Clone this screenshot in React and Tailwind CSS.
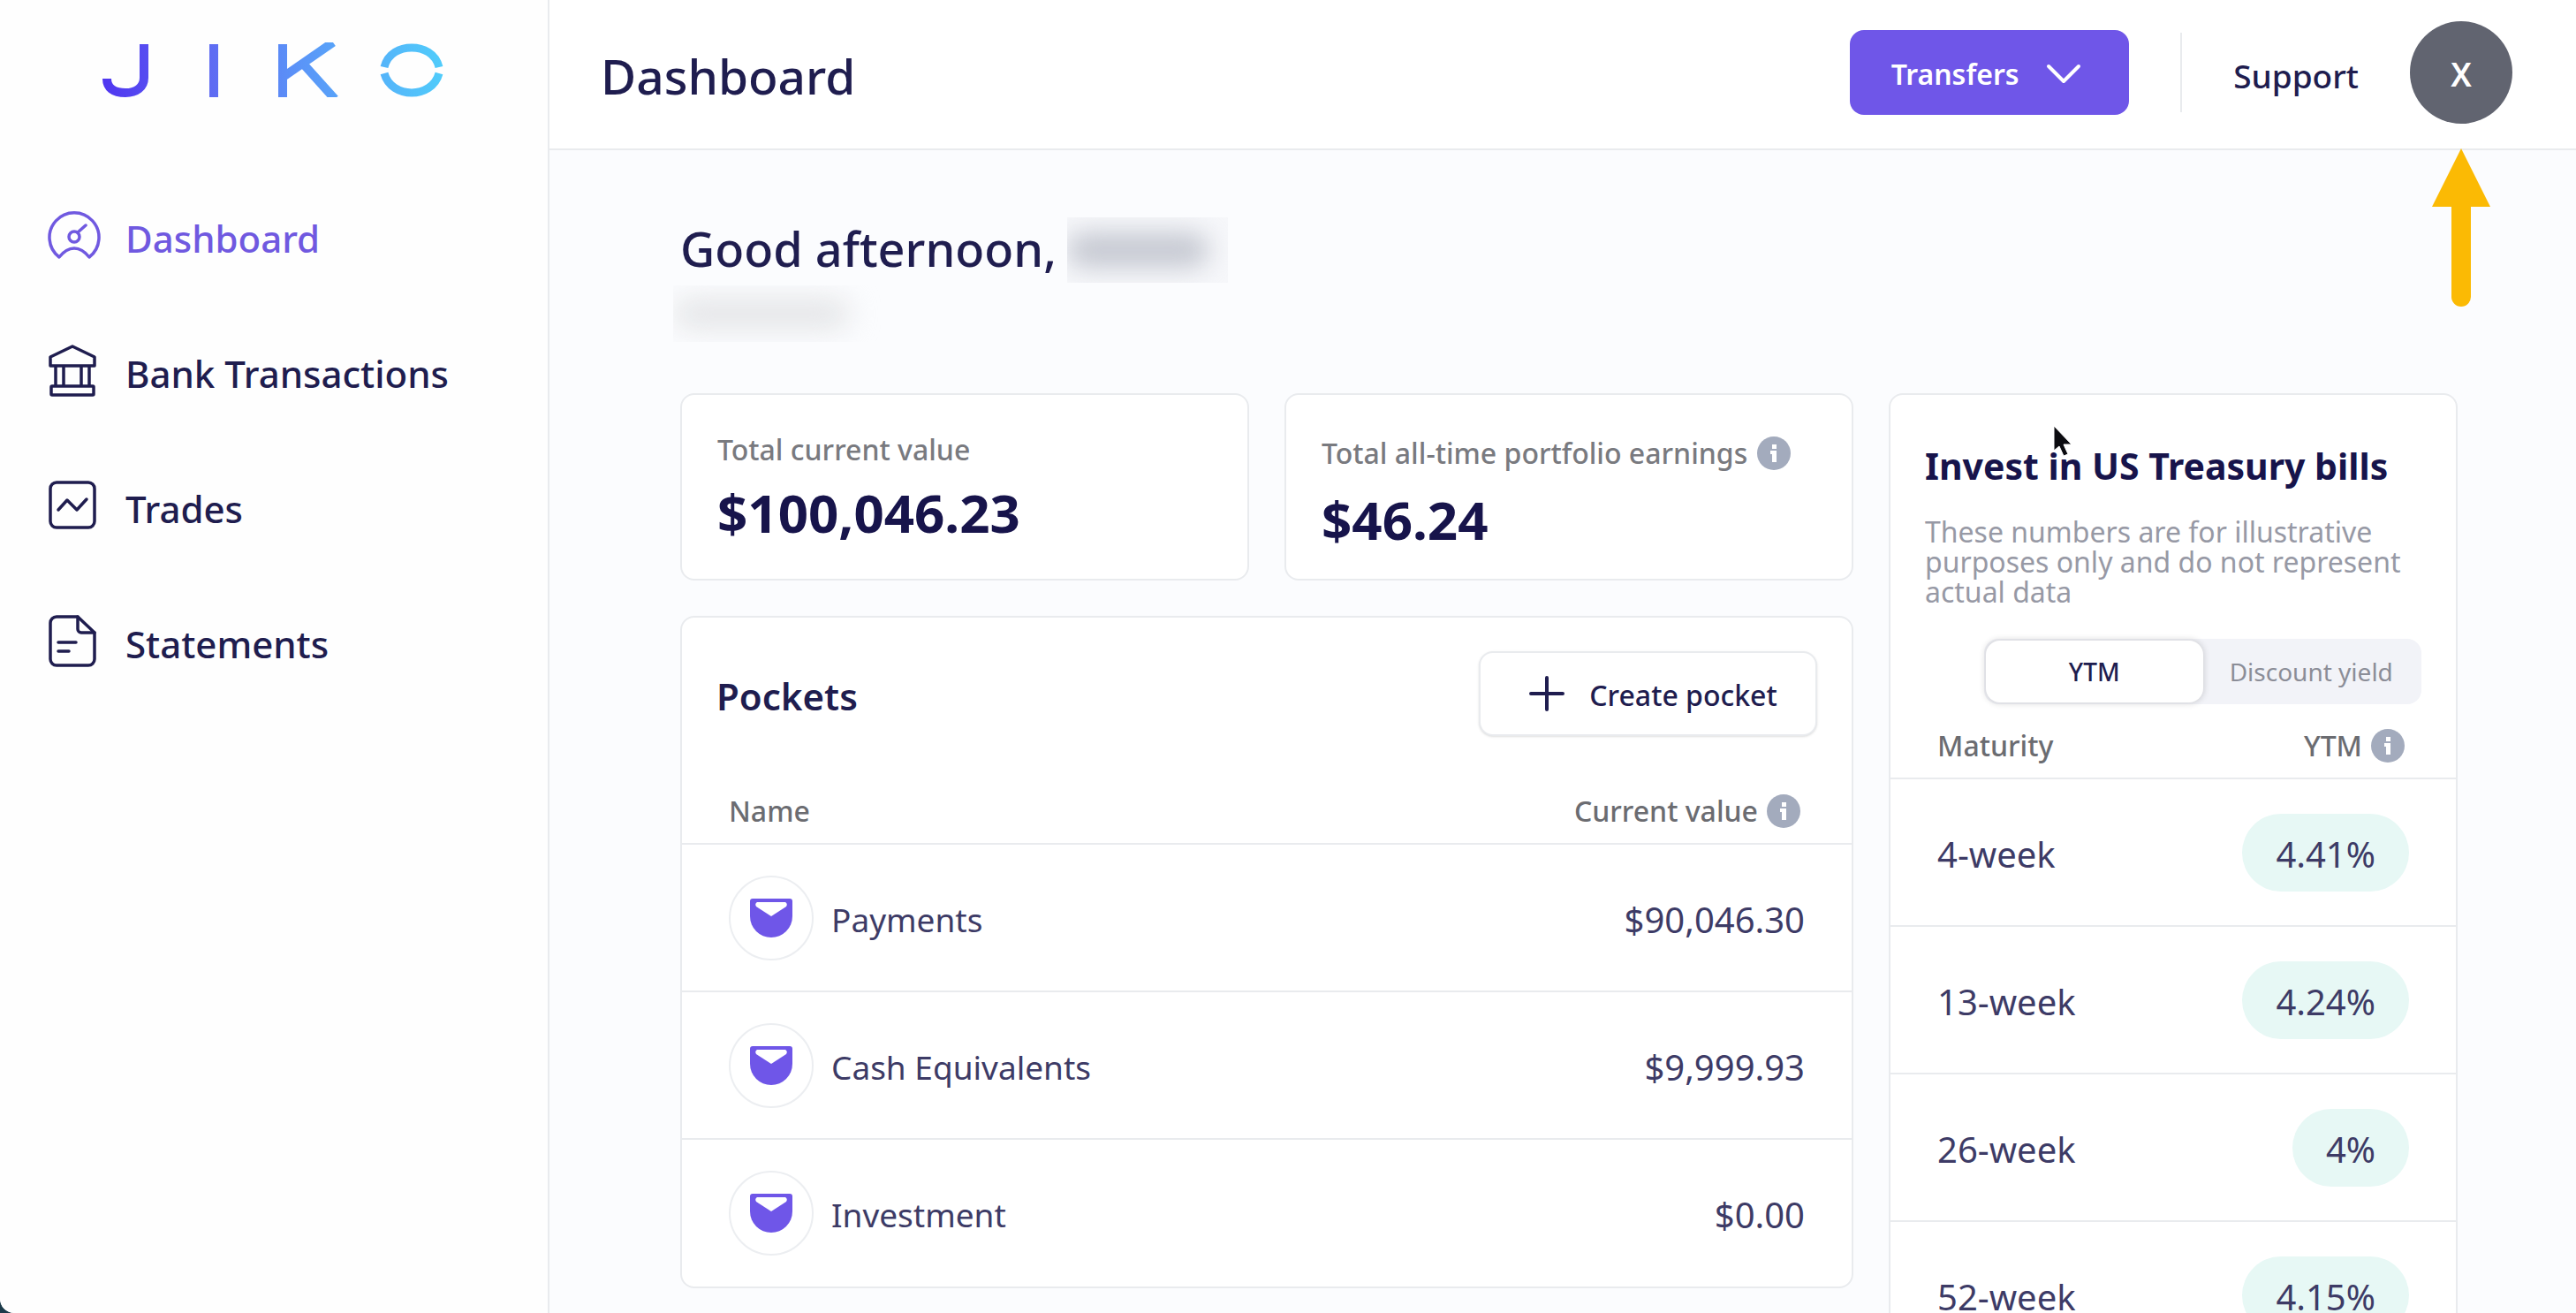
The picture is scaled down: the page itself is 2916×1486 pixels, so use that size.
const DashboardIcon = () => (
  <svg viewBox="0 0 60 60" className="size-15 shrink-0" fill="none" stroke="currentColor" strokeWidth="3.5" strokeLinejoin="round" strokeLinecap="round" aria-hidden="true">
    <path d="M13 54A28 28 0 1 1 47 54Q39 44 30 44T13 54Z" />
    <circle cx="30" cy="31" r="6" />
    <path d="M34 26L43 18" />
  </svg>
)

const BankIcon = () => (
  <svg viewBox="0 0 60 60" className="size-15 shrink-0" fill="none" stroke="currentColor" strokeWidth="3.5" strokeLinejoin="round" aria-hidden="true">
    <path d="M3 14L28 2L53 14V24H3Z" />
    <path d="M9 24V47M18 24V47M38 24V47M47 24V47" />
    <rect x="4" y="47" width="48" height="10" rx="1" />
  </svg>
)

const TradesIcon = () => (
  <svg viewBox="0 0 60 60" className="size-15 shrink-0" fill="none" stroke="currentColor" strokeWidth="3.5" strokeLinejoin="round" strokeLinecap="round" aria-hidden="true">
    <rect x="3" y="3" width="50" height="51" rx="7" />
    <path d="M12 34L22 23L33 34L44 22" />
  </svg>
)

const StatementsIcon = () => (
  <svg viewBox="0 0 60 60" className="size-15 shrink-0" fill="none" stroke="currentColor" strokeWidth="3.5" strokeLinejoin="round" strokeLinecap="round" aria-hidden="true">
    <path d="M10 2H34L53 20V50A7 7 0 0 1 46 57H10A7 7 0 0 1 3 50V9A7 7 0 0 1 10 2Z" />
    <path d="M34 2V16A4 4 0 0 0 38 20H53" />
    <path d="M12 31H32M12 41H24" />
  </svg>
)

const Logo = () => (
  <svg viewBox="0 0 388 62" className="w-[388px] h-[62px]" role="img" aria-label="Jiko">
    <defs>
      <linearGradient id="logo" gradientUnits="userSpaceOnUse" x1="0" y1="50" x2="388" y2="20">
        <stop offset="0" stopColor="#4f35f0" />
        <stop offset="0.3" stopColor="#5f68f2" />
        <stop offset="0.6" stopColor="#5a97f8" />
        <stop offset="1" stopColor="#50cdfb" />
      </linearGradient>
    </defs>
    <g fill="none" stroke="url(#logo)" strokeWidth="10">
      <path d="M48 2V40C48 51 39 57 27 57C13 57 6 51 6 41" />
      <path d="M127 2L127.010 62" />
      <path d="M205 2L205.010 62" />
      <path d="M262 0L207 38" />
      <path d="M228 24L264 64" />
      <path d="M320 28C324 12 338 6 351 6C364 6 378 12 382 28" strokeWidth="9" />
      <path d="M320 35C324 50 338 57 351 57C364 57 378 50 382 35" strokeWidth="9" />
    </g>
  </svg>
)

const PocketIcon = () => (
  <span className="flex size-24 shrink-0 items-center justify-center rounded-full border-2 border-[#eceef1]">
    <svg viewBox="0 0 48 44" className="h-11 w-12" aria-hidden="true">
      <path d="M3 0H45A3 3 0 0 1 48 3V20A24 24 0 0 1 0 20V3A3 3 0 0 1 3 0Z" fill="#6f56e8" />
      <path d="M8 4H40Q43 6 41 9L24 20L7 9Q5 6 8 4Z" fill="#fff" />
    </svg>
  </span>
)

const InfoIcon = () => (
  <svg viewBox="0 0 38 38" className="size-[38px] shrink-0" role="img" aria-label="More information">
    <circle cx="19" cy="19" r="19" fill="#a3abbd" />
    <rect x="17" y="9" width="5" height="5" fill="#fff" />
    <path d="M15 16H22V29H17V20H15Z" fill="#fff" />
  </svg>
)

const menuItems = [
  { name: 'Dashboard', icon: DashboardIcon, active: true },
  { name: 'Bank Transactions', icon: BankIcon },
  { name: 'Trades', icon: TradesIcon },
  { name: 'Statements', icon: StatementsIcon }
]

const pockets = [
  { name: 'Payments', value: '$90,046.30' },
  { name: 'Cash Equivalents', value: '$9,999.93' },
  { name: 'Investment', value: '$0.00' }
]

const bills = [
  { maturity: '4-week', rate: '4.41%' },
  { maturity: '13-week', rate: '4.24%' },
  { maturity: '26-week', rate: '4%' },
  { maturity: '52-week', rate: '4.15%' }
]

const Sidebar = () => (
  <aside className="w-[622px] shrink-0 rounded-bl-2xl border-r-2 border-[#e9ebee] bg-[#fefefe]">
    <div className="pt-12 pl-[115px]">
      <Logo />
    </div>
    <nav className="mt-[119px] pl-[54px]">
      <ul className="flex flex-col gap-[77px]">
        {menuItems.map((item) => (
          <li key={item.name}>
            <a
              href="#"
              className={`flex h-[76px] items-center gap-7 text-[42px] font-medium ${
                item.active ? 'text-[#7059e0]' : 'text-[#1f1d4f]'
              }`}
            >
              <item.icon />
              <span className="pt-1">{item.name}</span>
            </a>
          </li>
        ))}
      </ul>
    </nav>
  </aside>
)

const Header = () => (
  <header className="flex h-[170px] items-center border-b-2 border-[#e9ebee] bg-white pr-[72px] pb-1 pl-[58px]">
    <h1 className="pt-2 text-[55px] leading-[72px] font-medium">Dashboard</h1>
    <button type="button" className="ml-auto flex h-24 w-[316px] items-center justify-center gap-[30px] rounded-2xl bg-[#6f56e8] pt-1 pr-2 text-[32px] font-semibold text-white">
      Transfers
      <svg viewBox="0 0 40 24" className="h-6 w-10" fill="none" stroke="currentColor" strokeWidth="4" strokeLinecap="round" strokeLinejoin="round" aria-hidden="true">
        <path d="M3 3L20 20L37 3" />
      </svg>
    </button>
    <div className="ml-[58px] h-[90px] w-[2px] bg-[#e9ebee]" />
    <a href="#" className="ml-[58px] pt-2 text-[37px] leading-[48px] font-medium">Support</a>
    <div className="relative ml-[58px]">
      <button type="button" className="flex size-[116px] items-center justify-center rounded-full bg-[#616470] pt-1 text-[37px] font-semibold text-white">
        X
      </button>
      <svg viewBox="0 0 66 180" className="absolute top-36 left-[25px] z-10 h-[180px] w-[66px]" fill="#fbba04" aria-hidden="true">
        <path d="M33 0L66 66H44V168A11 11 0 0 1 22 168V66H0Z" />
      </svg>
    </div>
  </header>
)

const StatCard = ({ label, value, info }) => (
  <section className="rounded-2xl border-2 border-[#e9ebee] bg-white px-10 pt-10 pb-[30px]">
    <div className={`flex items-center gap-[11px] text-[#797a7f] ${info ? 'h-[52px]' : 'h-11'}`}>
      <h3 className="text-[32px] font-medium">{label}</h3>
      {info && <InfoIcon />}
    </div>
    <p className="mt-3 text-[60px] leading-[74px] font-bold text-[#17144b]">{value}</p>
  </section>
)

const Pockets = () => (
  <section className="rounded-2xl border-2 border-[#e9ebee] bg-white pt-[38px]">
    <div className="flex items-center justify-between px-[39px]">
      <h2 className="pt-1 text-[42px] font-semibold">Pockets</h2>
      <button type="button" className="flex h-24 w-[383px] items-center justify-center gap-7 rounded-2xl border-2 border-[#e9ebee] bg-white pl-3 text-[32px] font-medium shadow-sm">
        <svg viewBox="0 0 40 40" className="size-10" stroke="currentColor" strokeWidth="4" strokeLinecap="round" aria-hidden="true">
          <path d="M20 2V38M2 20H38" />
        </svg>
        <span className="pt-1">Create pocket</span>
      </button>
    </div>
    <table className="w-full">
      <thead>
        <tr className="h-[122px] border-b-2 border-[#e9ebee] align-bottom text-[32px] leading-[44px] text-[#6b6c71]">
          <th className="pb-[14px] pl-[53px] text-left font-medium">Name</th>
          <th className="pr-[58px] pb-[14px] font-medium">
            <span className="flex items-center justify-end gap-[10px]">
              Current value
              <InfoIcon />
            </span>
          </th>
        </tr>
      </thead>
      <tbody className="text-[37px] text-[#3d3b66]">
        {pockets.map((pocket) => (
          <tr key={pocket.name} className="h-[167px] border-b-2 border-[#e9ebee] last:border-b-0">
            <td className="pl-[53px]">
              <span className="flex items-center gap-5">
                <PocketIcon />
                <span className="pt-1">{pocket.name}</span>
              </span>
            </td>
            <td className="pt-1 pr-[53px] text-right text-[40px]">{pocket.value}</td>
          </tr>
        ))}
      </tbody>
    </table>
  </section>
)

const TreasuryBills = () => (
  <section className="relative self-start rounded-2xl border-2 border-[#e9ebee] bg-white pt-[50px]">
    <div className="px-[39px]">
      <h2 className="text-[41px] leading-[60px] font-bold whitespace-nowrap text-[#17144b]">Invest in US Treasury bills</h2>
      <p className="mt-7 text-[32px] leading-[34px] text-[#9799a5]">
        These numbers are for illustrative purposes only and do not represent actual data
      </p>
      <div className="mt-9 ml-auto flex h-[74px] w-[495px] rounded-2xl bg-[#f2f3f8] p-[2px] text-[28px]">
        <button type="button" aria-pressed="true" className="flex-1 rounded-2xl bg-white font-medium shadow-[0_0_6px_2px_rgba(0,0,0,0.12)]">
          YTM
        </button>
        <button type="button" aria-pressed="false" className="flex-1 text-[#8b8d97]">
          Discount yield
        </button>
      </div>
    </div>
    <table className="w-full">
      <thead>
        <tr className="h-[84px] border-b-2 border-[#e9ebee] align-bottom text-[32px] leading-[44px] text-[#6b6c71]">
          <th className="pb-[14px] pl-[53px] text-left font-medium">Maturity</th>
          <th className="pr-[58px] pb-[14px] font-medium">
            <span className="flex items-center justify-end gap-[10px]">
              YTM
              <InfoIcon />
            </span>
          </th>
        </tr>
      </thead>
      <tbody className="text-[40px] text-[#3d3b66]">
        {bills.map((bill) => (
          <tr key={bill.maturity} className="h-[167px] border-b-2 border-[#e9ebee] last:border-b-0">
            <td className="pt-1 pl-[53px]">{bill.maturity}</td>
            <td className="pr-[53px] text-right">
              <span className="inline-flex h-[88px] items-center rounded-full bg-[#e7f8f5] px-[38px] pt-1 align-middle">{bill.rate}</span>
            </td>
          </tr>
        ))}
      </tbody>
    </table>
    {/* Mouse pointer */}
    <svg viewBox="0 0 26 38" className="absolute top-[33px] left-[183px] h-[38px] w-[26px]" aria-hidden="true">
      <path d="M2 2V30L8 25L13 36L18 34L13 23H22Z" fill="#0b0b10" stroke="#fff" strokeWidth="1" />
    </svg>
  </section>
)

const App = () => (
  <div className="h-screen bg-[#1c3a4a] font-['Noto_Sans',sans-serif] text-[#1f1d4f]">
    <div className="flex h-full overflow-hidden rounded-bl-2xl bg-[#fbfcfe]">
      <Sidebar />
      <div className="min-w-0 flex-1">
        <Header />
        <main className="pt-[76px] pr-[134px] pl-[148px]">
          <div className="flex h-[74px] items-center gap-3">
            <h2 className="pb-1 text-[54px] font-medium">Good afternoon,</h2>
            <div className="flex h-full w-[182px] items-center overflow-hidden bg-[#f6f7fa]">
              <div className="h-10 w-40 rounded-full bg-[#c6c9d2] blur-[14px]" />
            </div>
          </div>
          <div className="mt-[3px] -ml-[8px] flex h-16 w-[243px] items-center overflow-hidden">
            <div className="h-8 w-[200px] rounded-full bg-[#e2e3e5] blur-[16px]" />
          </div>
          <div className="mt-[58px] grid grid-cols-3 gap-10">
            <div className="col-span-2 flex flex-col gap-10">
              <div className="grid grid-cols-2 gap-10">
                <StatCard label="Total current value" value="$100,046.23" />
                <StatCard label="Total all-time portfolio earnings" value="$46.24" info />
              </div>
              <Pockets />
            </div>
            <TreasuryBills />
          </div>
        </main>
      </div>
    </div>
  </div>
)

export default App
